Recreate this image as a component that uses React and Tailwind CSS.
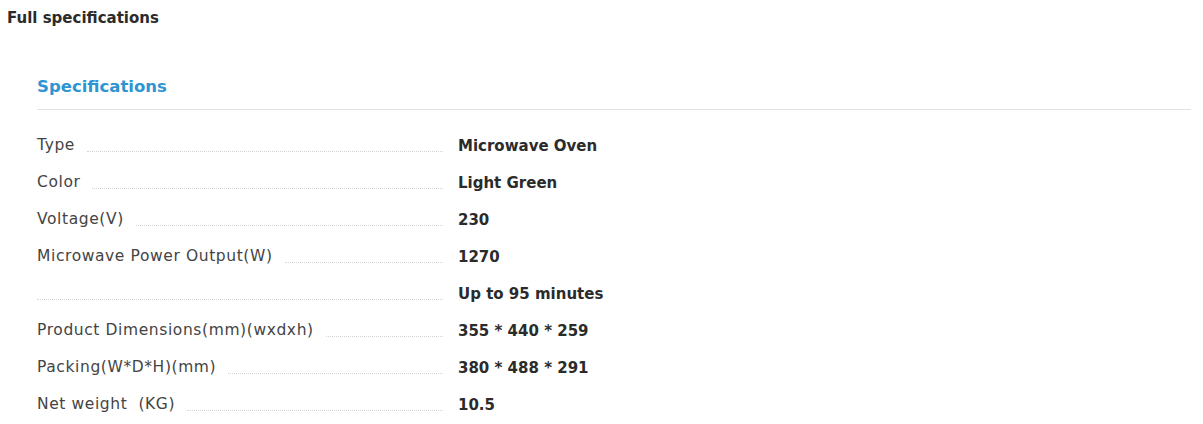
import React from 'react';

const specs = [
  { label: 'Type', value: 'Microwave Oven' },
  { label: 'Color', value: 'Light Green' },
  { label: 'Voltage(V)', value: '230' },
  { label: 'Microwave Power Output(W)', value: '1270' },
  { label: '', value: 'Up to 95 minutes' },
  { label: 'Product Dimensions(mm)(wxdxh)', value: '355 * 440 * 259' },
  { label: 'Packing(W*D*H)(mm)', value: '380 * 488 * 291' },
  { label: 'Net weight\u00a0\u00a0(KG)', value: '10.5' },
];

const SpecRow = ({ label, value }) => (
  <div className="flex items-end h-[37px]">
    <div className="flex items-end w-[406px]">
      <span className="text-[15.5px] tracking-[0.6px] text-[#444] whitespace-pre leading-[20px]">{label}</span>
      <span className={`flex-1 border-b border-dotted border-[#d4d4d4] mb-[3px] ${label ? 'ml-[12px]' : ''}`}></span>
    </div>
    <div className="ml-[15px] text-[15px] font-bold text-[#2b2b2b] leading-[20px] translate-y-[1px]">
      {value}
    </div>
  </div>
);

export default function App() {
  return (
    <div className="bg-white w-[1203px] h-[424px] font-['DejaVu_Sans',sans-serif] overflow-hidden">
      <div className="pt-[8px] pl-[7px] text-[15px] font-bold text-[#2b2b2b] leading-[20px]">
        Full specifications
      </div>
      <div className="ml-[37px] mr-[12px] mt-[47px]">
        <div className="text-[16.5px] font-bold text-[#2f95d2] leading-[24px] pb-[10px] border-b border-[#e2e2e2]">
          Specifications
        </div>
        <div className="mt-[8px]">
          {specs.map((s, i) => (
            <SpecRow key={i} label={s.label} value={s.value} />
          ))}
        </div>
      </div>
    </div>
  );
}
